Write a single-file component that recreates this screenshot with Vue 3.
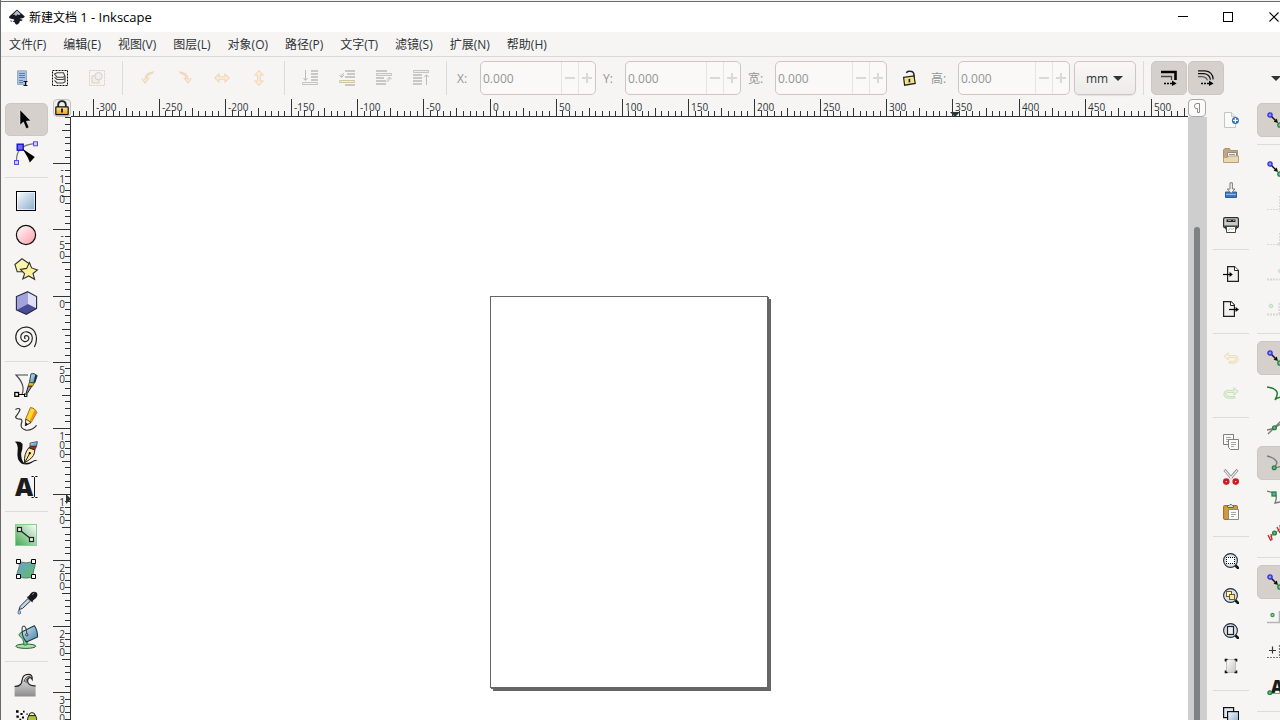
<template>
  <div class="window">
    <svg class="defs" aria-hidden="true" v-html="defs"></svg>

    <header class="titlebar">
      <svg class="logo" viewBox="0 0 16 16" v-html="icons.logo"></svg>
      <h1 class="title">新建文档 <span class="title-app">1 - Inkscape</span></h1>
      <div class="window-buttons">
        <button v-for="b in windowButtons" :key="b.icon" class="window-btn" :aria-label="b.label">
          <svg class="icon-window" viewBox="0 0 11 11" v-html="icons[b.icon]"></svg>
        </button>
      </div>
    </header>

    <nav class="menubar">
      <button v-for="m in menus" :key="m" class="menu-item">{{ m }}</button>
    </nav>

    <div class="controls">
      <template v-for="(group, i) in controlGroups" :key="i">
        <button v-for="name in group" :key="name" class="tool-btn" :aria-label="name">
          <svg class="icon-small" viewBox="0 0 16 16" v-html="icons[name]"></svg>
        </button>
        <span class="v-sep"></span>
      </template>

      <template v-for="f in fields" :key="f.id">
        <button v-if="f.id === 'h'" class="lock-btn" aria-label="锁定宽高比">
          <svg class="icon-small" viewBox="0 0 16 16" v-html="icons.unlock"></svg>
        </button>
        <label :for="f.id" :class="['field-label', 'label-' + f.id]">{{ f.label }}</label>
        <div :class="['spin', f.narrow ? 'spin-narrow' : '']">
          <input :id="f.id" v-model="f.value" class="spin-input" type="text" disabled>
          <button class="spin-btn" disabled aria-label="减少">
            <svg class="spin-icon" viewBox="0 0 10 10"><path d="M0 5H10" /></svg>
          </button>
          <button class="spin-btn" disabled aria-label="增加">
            <svg class="spin-icon" viewBox="0 0 10 10"><path d="M0 5H10M5 0V10" /></svg>
          </button>
        </div>
      </template>

      <div class="unit">
        <select v-model="unit" class="unit-select" aria-label="单位">
          <option>mm</option>
          <option>px</option>
          <option>cm</option>
        </select>
        <svg class="unit-arrow" viewBox="0 0 10 5"><path d="M0 0H10L5 5Z" /></svg>
      </div>
      <span class="v-sep"></span>
      <button class="tool-btn active" aria-label="缩放描边宽度">
        <svg class="icon-small" viewBox="0 0 16 16" v-html="icons.scaleStroke"></svg>
      </button>
      <button class="tool-btn active" aria-label="缩放圆角">
        <svg class="icon-small" viewBox="0 0 16 16" v-html="icons.scaleCorner"></svg>
      </button>
      <button class="more-btn" aria-label="更多">
        <svg class="more-arrow" viewBox="0 0 10 5"><path d="M0 0H10L5 5Z" /></svg>
      </button>
    </div>

    <main class="main">
      <aside class="toolbox">
        <div v-for="(group, i) in toolGroups" :key="i" class="toolbox-group">
          <button
            v-for="name in group"
            :key="name"
            :class="['toolbox-btn', { active: tool === name }]"
            :aria-label="name"
            @click="tool = name"
          >
            <svg class="icon-tool" viewBox="0 0 24 24" v-html="icons[name]"></svg>
          </button>
        </div>
      </aside>

      <section class="workspace">
        <button class="corner-btn" aria-label="锁定参考线">
          <svg class="icon-small" viewBox="0 0 16 16" v-html="icons.lock"></svg>
        </button>
        <svg class="ruler-h">
          <path class="tick" :d="hPath" />
          <text v-for="t in hLabels" :key="t.mm" class="ruler-text" :x="t.pos + 3" y="12">{{ t.mm }}</text>
          <path class="marker" d="M879 13H889L884 18Z" />
        </svg>
        <button class="corner-btn corner-right" aria-label="显示模式">
          <svg class="icon-small" viewBox="0 0 16 16" v-html="icons.display"></svg>
        </button>
        <svg class="ruler-v">
          <path class="tick" :d="vPath" />
          <template v-for="t in vLabels" :key="t.mm">
            <text
              v-for="(c, i) in t.chars"
              :key="i"
              class="ruler-text centered"
              x="9"
              :y="t.start + i * t.step"
            >{{ c }}</text>
          </template>
          <path class="marker" d="M13 377V387L18 382Z" />
        </svg>
        <div class="canvas">
          <div class="page"></div>
        </div>
        <div class="scrollbar">
          <div class="thumb"></div>
        </div>
      </section>

      <aside class="side commands">
        <div v-for="(group, i) in commandGroups" :key="i" class="side-group">
          <button v-for="name in group" :key="name" class="side-btn" :aria-label="name">
            <svg class="icon-small" viewBox="0 0 16 16" v-html="icons[name]"></svg>
          </button>
        </div>
      </aside>

      <aside class="side snap">
        <div v-for="(group, i) in snapGroups" :key="i" class="side-group">
          <button
            v-for="(s, j) in group"
            :key="j"
            :class="['side-btn', { active: s.on }]"
            :aria-label="s.icon"
            @click="s.on = !s.on"
          >
            <svg class="icon-small" viewBox="0 0 16 16" v-html="icons[s.icon]"></svg>
          </button>
        </div>
      </aside>
    </main>
  </div>
</template>

<script setup>
import { ref, reactive } from 'vue'

const tool = ref('select')
const unit = ref('mm')

const menus = ['文件(F)', '编辑(E)', '视图(V)', '图层(L)', '对象(O)', '路径(P)', '文字(T)', '滤镜(S)', '扩展(N)', '帮助(H)']

const windowButtons = [
  { icon: 'min', label: '最小化' },
  { icon: 'max', label: '最大化' },
  { icon: 'close', label: '关闭' }
]

const controlGroups = [
  ['selectAll', 'selectLayers', 'deselect'],
  ['rotateLeft', 'rotateRight', 'flipH', 'flipV'],
  ['toBottom', 'lower', 'raise', 'toTop']
]

const fields = reactive([
  { id: 'x', label: 'X:', value: '0.000' },
  { id: 'y', label: 'Y:', value: '0.000' },
  { id: 'w', label: '宽:', value: '0.000', narrow: true },
  { id: 'h', label: '高:', value: '0.000', narrow: true }
])

const toolGroups = [
  ['select', 'node'],
  ['rect', 'circle', 'star', 'box', 'spiral'],
  ['pen', 'pencil', 'calligraphy', 'text'],
  ['gradient', 'mesh', 'dropper', 'bucket'],
  ['tweak', 'spray']
]

const commandGroups = [
  ['new', 'open', 'save', 'print'],
  ['import', 'export'],
  ['undo', 'redo'],
  ['copy', 'cut', 'paste'],
  ['zoomSelection', 'zoomDrawing', 'zoomPage', 'centerPage'],
  ['duplicate']
]

const snapGroups = reactive([
  [{ icon: 'snap', on: true }],
  [
    { icon: 'snap', on: false },
    { icon: 'snapEdge', on: false },
    { icon: 'snapCorner', on: false },
    { icon: 'snapMid', on: false },
    { icon: 'snapCenter', on: false }
  ],
  [
    { icon: 'snap', on: true },
    { icon: 'snapPath', on: false },
    { icon: 'snapCross', on: false },
    { icon: 'snapCusp', on: true },
    { icon: 'snapSmooth', on: false },
    { icon: 'snapLine', on: false }
  ],
  [
    { icon: 'snap', on: true },
    { icon: 'snapObject', on: false },
    { icon: 'snapRotation', on: false },
    { icon: 'snapText', on: false }
  ],
  [{ icon: 'snapPage', on: false }]
])

// 标尺
const PX_PER_MM = 1.3228
const ORIGIN_X = 419
const ORIGIN_Y = 179

const buildTicks = (origin, from, to) => {
  const list = []
  for (let mm = from; mm <= to; mm += 5) {
    const len = mm % 50 === 0 ? 18 : mm % 25 === 0 ? 9 : 6
    list.push({ mm, pos: Math.floor(origin + mm * PX_PER_MM), len })
  }
  return list
}

const hTicks = buildTicks(ORIGIN_X, -315, 1500)
const vTicks = buildTicks(ORIGIN_Y, -135, 1000)
const hPath = hTicks.map(t => `M${t.pos + 0.5} ${18 - t.len}V18`).join('') + 'M0 17.5H4000'
const vPath = vTicks.map(t => `M${18 - t.len} ${t.pos + 0.5}H18`).join('') + 'M17.5 0V4000'
const hLabels = hTicks.filter(t => t.len === 18)
// 垂直标尺的数字逐个竖排
const vLabels = vTicks.filter(t => t.len === 18).map(t => ({
  mm: t.mm,
  chars: String(t.mm).split(''),
  start: t.pos + (t.mm < 0 ? 10 : 12),
  step: t.mm < 0 ? 10 : 9
}))

const defs = `
  <linearGradient id="g-blue" x1="0" y1="0" x2="1" y2="1"><stop offset="0" stop-color="#fff"/><stop offset="1" stop-color="#86a9cc"/></linearGradient>
  <linearGradient id="g-pink" x1="0" y1="0" x2="1" y2="1"><stop offset="0" stop-color="#fff"/><stop offset="1" stop-color="#ff9aa8"/></linearGradient>
  <linearGradient id="g-green" x1="1" y1="0" x2="0" y2="1"><stop offset="0" stop-color="#fff"/><stop offset="1" stop-color="#3fa850"/></linearGradient>
  <linearGradient id="g-mesh" x1="0" y1="0" x2="1" y2="1"><stop offset="0" stop-color="#6b9fd8"/><stop offset="1" stop-color="#5fc05c"/></linearGradient>
  <linearGradient id="g-steel" x1="0" y1="0" x2="1" y2="1"><stop offset="0" stop-color="#d5eaf5"/><stop offset="1" stop-color="#3f7fa8"/></linearGradient>
  <linearGradient id="g-gold" x1="0" y1="0" x2="0" y2="1"><stop offset="0" stop-color="#f9e9a0"/><stop offset="1" stop-color="#f19d10"/></linearGradient>
  <linearGradient id="g-paper" x1="0" y1="0" x2="1" y2="1"><stop offset="0" stop-color="#fff"/><stop offset="1" stop-color="#c4c4c2"/></linearGradient>
  <linearGradient id="g-grey" x1="0" y1="0" x2="0" y2="1"><stop offset="0" stop-color="#eee"/><stop offset="1" stop-color="#8c8c8c"/></linearGradient>`

const lens = '<path d="M12.5 12.5L15 15" stroke="#15191c" stroke-width="2.6" stroke-linecap="round"/><circle cx="7.5" cy="7.5" r="6.9" fill="#d3e3f1" stroke="#1f2d38" stroke-width="1.1"/>'
const greenDot = (x, y) => `<circle cx="${x}" cy="${y}" r="1.9" fill="#6fa0c8" stroke="#1f8a2c" stroke-width="1.3"/>`

const icons = {
  logo: '<path d="M8 0.5L15.5 7.2Q16.4 8.7 13.5 9.2L10.5 9.8Q12 10.5 13.6 10.7L13 11.8L10.8 12Q11 14.8 8 15.8Q5.6 15 6 13.4L3.4 12.2Q6.2 12 5 10.6L1.2 9.6Q-.8 8.3 .8 7Z" fill="#171922"/><path d="M8 1.5L11.6 5L10 6.2L8.6 5.2L7 7L5.5 5.5L3.6 6.2Z" fill="#b8bdcc"/><path d="M1.2 11.2L3.4 12L2 13Z" fill="#3a4258"/>',
  min: '<path d="M1 4.5H11" stroke="#000"/>',
  max: '<rect x=".5" y=".5" width="9" height="9" fill="none" stroke="#000"/>',
  close: '<path d="M.5 .5L9.5 9.5M9.5 .5L.5 9.5" stroke="#000" stroke-width="1.1"/>',

  selectAll: '<path d="M2.5 .8H11.5V14.5H2.5Z" fill="#a9c4e2" stroke="#9aaabb"/><path d="M4 3.5H10M4 5.5H10M4 7.5H10M4 10.5H8M4 12.5H8" stroke="#597fae"/><path d="M8.5 11.5H12.5M10.5 11.5V15.5M8.5 15.5H12.5" stroke="#111"/>',
  selectLayers: '<rect x=".5" y=".5" width="15" height="15" fill="none" stroke="#000" stroke-dasharray="2 1"/><path d="M2.5 4L5 2.8H11.5L13 6.2L11 7.2H5ZM2.5 7.4L5 9.5H11L13.2 8.4M2.5 10.4L5 13H11L13.5 11.6M13 6.2V12" fill="#f2f2f0" stroke="#444" stroke-width="1.1"/>',
  deselect: '<g opacity=".4"><rect x=".5" y=".5" width="15" height="15" fill="none" stroke="#e88080" stroke-dasharray="2 1"/><rect x="3" y="6" width="7" height="7" fill="#eceac0" stroke="#a6a17a"/><circle cx="9.5" cy="6.2" r="3.7" fill="#e4e6ea" stroke="#949aa4"/></g>',
  rotateLeft: '<path d="M14 1.8Q5.5 2 4.8 10M1.8 8.4L5 13L8.6 8.4H6.6Q7 4.5 13 3.2" fill="#fbeee0" stroke="#f1d6ba" stroke-width="1.2"/>',
  rotateRight: '<path d="M2 1.8Q10.5 2 11.2 10M14.2 8.4L11 13L7.4 8.4H9.4Q9 4.5 3 3.2" fill="#fbeee0" stroke="#f1d6ba" stroke-width="1.2"/>',
  flipH: '<path d="M.7 8L5 4V6.7H11V4L15.3 8L11 12V9.3H5V12Z" fill="#fbeee0" stroke="#f1d6ba" stroke-width="1.1"/>',
  flipV: '<path d="M8 .7L12 5H9.3V11H12L8 15.3L4 11H6.7V5H4Z" fill="#fbeee0" stroke="#f1d6ba" stroke-width="1.1"/>',
  toBottom: '<path d="M9 1H16M9 4H16M9 7H16M9 10H16" stroke="#c8c8c4" stroke-width="2"/><path d="M.5 12.5H15.5V14.5H.5Z" fill="none" stroke="#c3c3bf"/><path d="M3.5 0V10M1.5 8L3.5 10.5L5.5 8" fill="none" stroke="#bbb"/>',
  lower: '<path d="M6 1H16M8 4H16M6 7H16M6 15H16" stroke="#c8c8c4" stroke-width="2"/><path d="M.5 10.5H15.5V12.5H.5Z" fill="#f7efc8" stroke="#cfc8a4"/><path d="M5 3.5Q2.5 3.5 2.5 7M.5 5L2.5 7.5L5 5" fill="none" stroke="#bbb"/>',
  raise: '<path d="M0 1H11M0 8H8M0 11H10M0 14H10" stroke="#c8c8c4" stroke-width="2"/><path d="M.5 3.5H15.5V5.5H.5Z" fill="#eee" stroke="#c3c3bf"/><path d="M10.5 11.5Q13.5 11.5 13.5 8M11 9.5L13.5 7L16 9.5" fill="none" stroke="#bbb"/>',
  toTop: '<path d="M0 5H9M0 8H9M0 11H9M0 14H9" stroke="#c8c8c4" stroke-width="2"/><path d="M.5 .5H15.5V2.5H.5Z" fill="#eee" stroke="#c3c3bf"/><path d="M13.5 15V5M11.2 7.2L13.5 4.7L15.8 7.2" fill="none" stroke="#bbb"/>',
  unlock: '<path d="M5.5 3Q6 .8 9 1.2Q13 1.4 13 5V8" fill="none" stroke="#222" stroke-width="1.5"/><path d="M2.6 7.4L13 6L14.2 13.4L3.6 15.2Z" fill="#f1e48a" stroke="#222" stroke-width="1.2"/><path d="M8.4 8.8V12.4" stroke="#222" stroke-width="1.7"/>',
  scaleStroke: '<path d="M0 2H14.5V10" fill="none" stroke="#000" stroke-width="2.6"/><path d="M0 6.5H10.5V10" fill="none" stroke="#444" stroke-width="1.3"/><path d="M3 13.5H12" stroke="#000" stroke-width="1.6" stroke-dasharray="2 1"/><path d="M11 10.6L15.6 13.5L11 16Z"/>',
  scaleCorner: '<path d="M0 .8H7Q14.8 1.5 15.2 9.4M0 3.6H6Q11.8 4.2 12.4 9.8" fill="none" stroke="#111" stroke-width="1.2"/><path d="M0 6.6H4Q8.6 7 9.4 10.4" fill="none" stroke="#555" stroke-width="1.2"/><path d="M3 13.5H12" stroke="#000" stroke-width="1.6" stroke-dasharray="2 1"/><path d="M11 10.6L15.6 13.5L11 16Z"/>',
  lock: '<path d="M4.2 7V4.5Q4.5 1.2 8 1.2Q11.5 1.2 11.8 4.5V7" fill="none" stroke="#222" stroke-width="1.8"/><rect x="1.8" y="6.8" width="12.4" height="7.8" rx=".6" fill="url(#g-gold)" stroke="#111" stroke-width="1.2"/><path d="M8 8.5V12.5" stroke="#111" stroke-width="1.8"/>',
  display: '<path d="M8 3.5H10.5V12.5H8.5V8.5H7Q5.5 8 5.5 6Q5.5 3.5 8 3.5Z" fill="#fff" stroke="#8a8a8a"/>',

  select: '<path d="M6 2.8V18.2L9.4 15L12.2 21.8L15 20.4L12.4 14.2L16.8 13.8Z" fill="#000" stroke="#fff" stroke-width=".5"/>',
  node: '<path d="M2.5 20Q2 4.5 20 2.7" fill="none" stroke="#777" stroke-width="1.2"/><rect x="3.2" y="3.2" width="6" height="6" fill="#6a6af5" stroke="#1414c8" stroke-width="1.4"/><rect x="19.5" y=".8" width="4" height="4" fill="#ccf" stroke="#5050f0"/><rect x=".5" y="19.5" width="4" height="4" fill="#ccf" stroke="#5050f0"/><path d="M8.5 7.8L20.8 16L15.8 21.5L13.8 16.6Z" fill="#000"/>',
  rect: '<rect x="2.5" y="2.5" width="19" height="19" fill="url(#g-blue)" stroke="#000"/><rect x="3.5" y="3.5" width="17" height="17" fill="none" stroke="#fff" stroke-opacity=".6"/>',
  circle: '<circle cx="12" cy="12" r="9.6" fill="url(#g-pink)" stroke="#111" stroke-width="1.2"/>',
  star: '<path d="M8 1.7L16 7.2L13 14.7H3.2L.9 7.5Z" fill="#fdf6ae" stroke="#333" stroke-width="1.1"/><path d="M15.3 5.5L17.6 10.9L23.4 13L19 16.5L20.6 22.3L14.7 18.9L8.8 22L10.6 16.6L6.5 12.4L12.6 11.4Z" fill="#fdf29a" stroke="#333" stroke-width="1.1"/>',
  box: '<path d="M13.7 .7L22.6 5.5V17.5L12.3 23.3L2.4 19V5.5Z" fill="#9c9cd8"/><path d="M13.7 .7L22.6 5.5V17.5L13.7 13Z" fill="#e0e0f8"/><path d="M2.4 19L13.7 13L22.6 17.5L12.3 23.3Z" fill="#4b4b9c"/><path d="M2.4 5.5L13.7 .7V13L2.4 19Z" fill="#a3a3dc"/><path d="M13.7 .7L22.6 5.5V17.5L12.3 23.3L2.4 19V5.5Z" fill="none" stroke="#2a2a44" stroke-width="1.1"/>',
  spiral: '<path d="M11.5 13.8C10 13.2 10.2 10.8 12 10.6C14.8 10.4 15.6 13.4 14.2 15.2C11.8 17.8 7.4 16.4 6.8 13C6.2 9 9.4 6.4 13 6.8C17.8 7.4 19.2 12 17.8 16C15.4 21.6 8.6 23.4 4.8 19.4C.6 15 .8 8.4 5 4.6C10 .2 17.6 1.8 20.8 7C23 11.2 23 16.8 20.4 22" fill="none" stroke="#222" stroke-width="1.2"/>',
  pen: '<path d="M14 2H2Q8 8 9 14Q9.4 19 8 21" fill="none" stroke="#444" stroke-width="1.1"/><path d="M4 21.5H11" stroke="#000"/><rect x=".8" y="19.5" width="3.8" height="3.8" fill="#fff" stroke="#000" stroke-width="1.3"/><rect x="10.5" y="21" width="2.4" height="2.4" fill="#fff" stroke="#000"/><path d="M17 .8Q20 -.4 23.2 2.6L20.8 9.8L15.4 9.4Z" fill="url(#g-steel)" stroke="#244a5c"/><path d="M21.2 2L23.2 2.6L20.8 9.8L19.6 9.6Z" fill="#1b2c36"/><path d="M15.4 9.4L20.2 10L18.4 13.4H14Z" fill="#f6b524" stroke="#5c420c" stroke-width=".8"/><path d="M14.2 13.2H17.8L13.2 20.6L12.2 20Z" fill="#999" stroke="#222"/>',
  pencil: '<path d="M1.4 2.6Q5 .4 6 2.6Q5.4 5 1.6 9.8Q1.4 12 6.6 12.2Q9 12.8 7.2 17Q6.2 21.6 12 23.2Q18 23.8 22.6 18.4" fill="none" stroke="#333" stroke-width="1.2"/><path d="M16.4 .6Q21 .8 22.8 5.6L17.2 15.4L11.4 18.6L11.8 11.6Z" fill="#fdd835" stroke="#7c4b06" stroke-width=".8"/><path d="M20.8 2.6L22.6 5.6L17 15.4L15.6 14.4Z" fill="#f19021"/><path d="M11.9 12L17 15.4L11.4 18.6Z" fill="#fdf8d4" stroke="#222" stroke-width=".8"/><path d="M11.7 15.4L14.2 17.2L11.2 19Z" fill="#111"/>',
  calligraphy: '<path d="M.8 .8Q6.4 -.2 8.6 3Q8.8 8 7.2 12Q6.8 19.4 10.6 22.2Q16 21.6 18.4 20.2Q21.4 18 23.6 19.6Q20 20 17.4 22Q12.6 24.8 7.4 22.4Q2.4 19 3.6 10Q4.6 3.4 .8 .8Z" fill="#111"/><path d="M16 2L23.4 .6L22.6 5.4L16 5.2Z" fill="url(#g-steel)" stroke="#244a5c" stroke-width=".8"/><path d="M16 5.2L22.4 5.6L21 8.8L15 6.8Z" fill="#c41c1c" stroke="#4c0a0a" stroke-width=".6"/><path d="M14.8 6.8L20.8 9Q20.8 15 15.4 18.6L10.6 22Q9.6 13 14.8 6.8Z" fill="#fbe9a0" stroke="#222"/><path d="M11 21L15.6 12.6" stroke="#222"/><circle cx="15.8" cy="12.2" r="1.1"/>',
  text: '<text x="1" y="21" font-family="Open Sans, sans-serif" font-weight="800" font-size="25" fill="#1c1c1c">A</text><path d="M17.5 1.5H19.5L20.5 2.5L21.5 1.5H23.5M20.5 2.5V21.5M17.5 22.5H19.5L20.5 21.5L21.5 22.5H23.5" fill="none" stroke="#111"/>',
  gradient: '<rect x="1.5" y="1.5" width="21" height="21" fill="url(#g-green)" stroke="#8ccc94"/><path d="M7 8L17 16" stroke="#222" stroke-width="1.2"/><rect x="3.5" y="4.5" width="4" height="4" fill="#eee" stroke="#222" stroke-width="1.2"/><rect x="15.5" y="14.5" width="4" height="4" fill="#eee" stroke="#222" stroke-width="1.2"/>',
  mesh: '<path d="M4.5 4.5Q12 7.4 19.5 4.5Q22.4 6 20 12Q18.6 16 19.5 19.5Q12 22.6 4.5 19.5Q1.8 17 4.6 12Q6.2 9 4.5 4.5Z" fill="url(#g-mesh)" stroke="#4c6c6c" stroke-width=".9"/><path d="M2.5 2.5H6.5V6.5H2.5ZM17.5 2.5H21.5V6.5H17.5ZM2.5 17.5H6.5V21.5H2.5ZM17.5 17.5H21.5V21.5H17.5Z" fill="#fff" stroke="#000"/>',
  dropper: '<path d="M14 7.5L6.2 15.2L5 18.6L8.6 17.4L16.6 9.8Z" fill="#bcd6ee" stroke="#333"/><path d="M17 2Q20-.2 22.6 1.6Q24.6 4.4 21.8 7.2L19 9.6L18.4 11.4L12.8 6L14.6 5.2Z" fill="#15171b"/><path d="M18 3.6L20.4 2" stroke="#888"/><path d="M5.2 18.4Q3.4 21 4.2 22.6Q5.4 23.8 6.6 22.4Q7 21 5.2 18.4Z" fill="#9cc4ec" stroke="#35608e" stroke-width=".8"/>',
  bucket: '<ellipse cx="11.8" cy="21.2" rx="10" ry="2.2" fill="#a6e4a8" stroke="#2c5a30"/><path d="M9.2 7Q4 8 5.4 11Q10 13.6 9.8 20H12.6Q15.4 15 9.2 7Z" fill="#7fd08c" stroke="#2a6a36" stroke-width=".9"/><path d="M8.2 6.8L20.4 .8Q23.4 5 23.6 12L12.4 17Q8.4 12.8 8.2 6.8Z" fill="url(#g-steel)" stroke="#1f3a48" stroke-width="1.1"/><path d="M8.2 6.8Q7.4 1 10 1Q12.4 2 12.8 8.6" fill="none" stroke="#444" stroke-width="1.1"/><circle cx="12.8" cy="9.8" r="1.2" fill="#ddd" stroke="#333"/>',
  tweak: '<path d="M.6 13.4Q7.6 13.8 8 7.4Q8.6 1.4 14.4 1.4Q18.6 1.4 18.2 6.4L16.6 4.8Q13.6 4.6 13.8 9Q14.4 13 21.6 12.8V23.4H.6Z" fill="url(#g-grey)"/><path d="M.6 13.4Q7.6 13.8 8 7.4Q8.6 1.4 14.4 1.4Q18.6 1.4 18.2 6.4Q16.8 4 14.8 5Q12.6 7 14.4 10.6Q16.6 13.2 21.6 12.8" fill="none" stroke="#222" stroke-width="1.2"/><path d="M10 9Q11 3.4 16.6 3.2M12 10Q11.4 6.4 14 4.6" fill="none" stroke="#444" stroke-width=".9"/>',
  spray: '<path d="M2 3.2H4.6V5.8H2ZM6.4 6H8.6V8H6.4ZM2.4 8.4H4.8V10.8H2.4ZM9 3.8H10.6V5.4H9ZM8 9.6H10V11.6H8ZM12.4 6.4H13.8V7.8H12.4ZM5.4 11.8H7.2V13.4H5.4Z"/><path d="M13.6 11.4L15 8H21.4L22.6 11.4V24H13.6Z" fill="#a8c23c" stroke="#222"/><path d="M15 8.6Q15 5.6 18 5.6Q21 5.6 21 8.6Z" fill="#f7efb0" stroke="#222"/>',

  new: '<path d="M1.5 .5H8.5L12.5 4.5V15.5H1.5Z" fill="#fbfbfb" stroke="#c4c6c2"/><path d="M8.5 .5V4.5H12.5" fill="#eee" stroke="#c4c6c2"/><circle cx="12.4" cy="8.4" r="3.5" fill="#2f6fb4"/><path d="M12.4 6V10.8M10 8.4H14.8" stroke="#fff" stroke-width="1.3"/>',
  open: '<path d="M.5 14V3L1.8 1.5H6.4L7.6 3.5H14.5V14Z" fill="#c2a87a" stroke="#a89270"/><path d="M4.5 5.5H13.5V11H4.5Z" fill="#f6f6f4" stroke="#8c8c88"/><path d="M6 7.5H12" stroke="#999"/><path d="M.5 15.5V10.5L4 10.5L6 9H15.5V15.5Z" fill="#ecd6b4" stroke="#b79f7c"/>',
  save: '<path d="M2.5 10H13.5V15.5H2.5Z" fill="#3f78c0" stroke="#2c5c9c"/><path d="M3 12.4H13" stroke="#9cc0ea"/><path d="M7 .8H9.4V7H12L8.2 11.2L4.2 7H7Z" fill="#f4f4f2" stroke="#7c7e7a"/>',
  print: '<rect x=".6" y=".6" width="14.8" height="10" rx="1.4" fill="#c9cbc7" stroke="#2c2f30" stroke-width="1.2"/><path d="M3.5 2.5H12.5V5H3.5Z" fill="#222"/><path d="M5 3.5H8M10 3.5H11.5" stroke="#999"/><path d="M1 8.6H15L13.5 12.5H2.5Z" fill="#333638"/><path d="M3.5 9.5H12.5V15.5H3.5Z" fill="#fdfdfb" stroke="#444"/><path d="M5 13.5L7.5 11.2L9 12.6L11 11" stroke="#9ad07c" fill="none"/>',
  import: '<path d="M4.6 .6H11.5L15.4 4.5V15.4H4.6Z" fill="#f2f1ec" stroke="#222" stroke-width="1.2"/><path d="M11.5 .6V4.5H15.4" fill="#fff" stroke="#222"/><path d="M0 8.5H8" stroke="#000" stroke-width="1.2"/><path d="M6.6 6L9.8 8.5L6.6 11Z"/>',
  export: '<path d="M.6 .6H8L11.4 4V15.4H.6Z" fill="#f2f1ec" stroke="#222" stroke-width="1.2"/><path d="M7.5 .6V4.5H11.4" fill="#fff" stroke="#222"/><path d="M6 8.5H14" stroke="#000" stroke-width="1.2"/><path d="M12.6 6L16 8.5L12.6 11Z"/>',
  undo: '<path d="M5.2 2.6L.8 6.4L5.2 10V7.6H11.6Q13.4 7.8 13 9.8Q12.6 11.2 9.6 11.4H6V13.2H10Q15 13.2 15.2 9Q15 5.6 11.6 5.4H5.2Z" fill="#f9f1d8" stroke="#ebdcb8"/>',
  redo: '<path d="M10.8 2.6L15.2 6.4L10.8 10V7.6H4.4Q2.6 7.8 3 9.8Q3.4 11.2 6.4 11.4H12V13.2H6Q1 13.2 .8 9Q1 5.6 4.4 5.4H10.8Z" fill="#e6f1de" stroke="#c6dfb6"/>',
  copy: '<path d="M.5 .5H10.5V10.5H.5Z" fill="#fafaf8" stroke="#7f817d"/><path d="M3 3.5H8M3 5.5H8M3 7.5H6" stroke="#a5a7a3"/><path d="M5.5 5.5H15.5V15.5H7.5L5.5 13.5Z" fill="#fafaf8" stroke="#7f817d"/><path d="M8 8.5H13M8 10.5H13M8 12.5H11" stroke="#a5a7a3"/>',
  cut: '<path d="M1.5 .8L9 9.6M14.5 .8L7 9.6" stroke="#8a8c88" stroke-width="2.8"/><path d="M1.8 1.4L9 9.6M14.2 1.4L7 9.6" stroke="#f2f2f0" stroke-width="1.2"/><circle cx="3.3" cy="12.6" r="2" fill="#fff" stroke="#d01c24" stroke-width="2.6"/><circle cx="12.7" cy="12.6" r="2" fill="#fff" stroke="#d01c24" stroke-width="2.6"/>',
  paste: '<rect x=".6" y="1.6" width="13.8" height="13.8" rx=".8" fill="#d39a40" stroke="#9a6a1e"/><path d="M4.5 3.5V1.5H6L7 .5H8.5L9.5 1.5H10.5V3.5Z" fill="#d8dad6" stroke="#666864"/><path d="M5.5 5.5H15.5V15.5H5.5Z" fill="#fbfbf9" stroke="#888a86"/><path d="M8 8.5H13M8 10.5H13M8 12.5H11" stroke="#a5a7a3"/>',
  zoomSelection: lens + '<rect x="3" y="4" width="9" height="7" fill="#fff"/><path d="M3 4.5H12M3 10.5H12M3.5 4V11M11.5 4V11" stroke="#000" stroke-dasharray="1 1"/>',
  zoomDrawing: lens + '<rect x="3.5" y="3.5" width="5" height="5" fill="#fff8d0" stroke="#7a5a10"/><rect x="6.5" y="6.5" width="5" height="5" fill="#fbe7a0" stroke="#7a5a10"/>',
  zoomPage: lens + '<rect x="4.5" y="3.5" width="6" height="8" fill="#eee" stroke="#222" stroke-width="1.2"/>',
  centerPage: '<rect x="3.5" y="1.5" width="9" height="13" fill="url(#g-paper)" stroke="#c0c0bc"/><path d="M2.5 3.5V1.5H4.5M11.5 1.5H13.5V3.5M2.5 12.5V14.5H4.5M11.5 14.5H13.5V12.5" fill="none" stroke="#111" stroke-width="1.6"/>',
  duplicate: '<rect x=".6" y=".6" width="10" height="10" fill="#dfe9f3" stroke="#111" stroke-width="1.2"/><rect x="4.6" y="4.6" width="11" height="11" fill="url(#g-blue)" stroke="#111" stroke-width="1.2"/>',

  snap: '<path d="M4.5 4.5L9 9" stroke="#111" stroke-width="1.4"/><path d="M11 11L6.6 9.8L9.8 6.6Z" fill="#111"/><circle cx="3" cy="3" r="2.1" fill="#8f8ff5" stroke="#2b2be0" stroke-width="1.3"/><circle cx="13" cy="13" r="2.2" fill="#8cb4c4" stroke="#1f8a2c" stroke-width="1.3"/>',
  snapEdge: '<path d="M0 13.5H13M12.5 0V16" stroke="#d3ddd3" stroke-dasharray="2 1"/>',
  snapCorner: '<path d="M0 13.5H13M12.5 2V13" stroke="#d3ddd3" stroke-dasharray="2 1"/><circle cx="12.5" cy="13" r="2" fill="#cfe4d0"/>',
  snapMid: '<path d="M0 13.5H16" stroke="#d8d8d6" stroke-width="2" stroke-dasharray="2 1"/><circle cx="13" cy="5" r="2.2" fill="#cfe4d0"/>',
  snapCenter: '<path d="M0 13.5H16M12.5 2V13" stroke="#d8d8d6" stroke-width="2" stroke-dasharray="2 1"/><circle cx="4" cy="5" r="1.8" fill="#dcebdc" stroke="#b9dcbc"/>',
  snapPath: '<path d="M0 2Q8 3 10 7Q11 10 8 15M8 14.5Q11 12 15 12" fill="none" stroke="#1f7a2a" stroke-width="1.5"/>',
  snapCross: '<path d="M0 10Q7 9 15 3M1 14L14 1" fill="none" stroke="#777975" stroke-width="1.3"/>' + greenDot(7.5, 7.8),
  snapCusp: '<path d="M0 1Q9 3 10 8L8 12M8 13L15 11" fill="none" stroke="#777" stroke-width="1.3"/>' + greenDot(7.2, 12.8),
  snapSmooth: '<path d="M0 1L7 3Q11 6 8 13L15 11.6" fill="none" stroke="#777" stroke-width="1.3"/><rect x="5" y="2" width="4" height="4" fill="#6fa0c8" stroke="#1f8a2c" stroke-width="1.3"/>',
  snapLine: '<path d="M2 13L14 3" stroke="#888"/><path d="M1 10L4 16M4 9L5 15M10 2L13 8M13 0L14 7" stroke="#cc2a2a" stroke-width="1.4"/>' + greenDot(7.5, 8),
  snapObject: '<path d="M0 13.5H13M12.5 2V14" stroke="#b4b6b2" stroke-width="1.6"/><circle cx="5.5" cy="6" r="1.6" fill="#9cc4c0" stroke="#3a9a46" stroke-width="1.2"/>',
  snapRotation: '<path d="M5.5 2.5V9.5M2 6.5H9" stroke="#333" stroke-width="1.2"/><path d="M0 13.5H16M12.5 1V14" stroke="#777" stroke-width="1.2" stroke-dasharray="2 1"/>',
  snapText: '<text x="4" y="14" font-family="Open Sans, sans-serif" font-weight="800" font-size="17" fill="#1c1c1c">A</text><path d="M3 14.5H16" stroke="#6ab070"/>' + greenDot(2.8, 13.8),
  snapPage: '<path d="M1.5 1.5H14.5V14.5H1.5Z" fill="#fff" stroke="#777"/>'
}
</script>

<style>
body {
  background: #f6f5f4;
}
</style>

<style scoped>
.window {
  height: 100vh;
  display: flex;
  flex-direction: column;
  overflow: hidden;
  box-sizing: border-box;
  padding-top: 1px;
  border-left: 1px solid #666a6d;
  background: #f6f5f4;
  color: #2e3436;
  font-family: "Open Sans", "Noto Sans CJK SC", sans-serif;
  font-size: 12px;
}

.window button,
.window select,
.window input {
  font: inherit;
  color: inherit;
  margin: 0;
  padding: 0;
  border: none;
  background: none;
  box-sizing: border-box;
}

.window svg {
  display: block;
  flex: none;
}

.window .defs {
  position: absolute;
  width: 0;
  height: 0;
}

.icon-small {
  width: 16px;
  height: 16px;
}

.titlebar {
  flex: none;
  height: 30px;
  display: flex;
  align-items: center;
  gap: 4px;
  padding-left: 8px;
  border-top: 1px solid #6b6b6b;
  background: #fff;
}

.logo {
  width: 16px;
  height: 16px;
}

.title {
  margin: 0;
  font-size: 12px;
  font-weight: 400;
  line-height: 30px;
  color: #000;
}

.title-app {
  font-size: 13px;
}

.window-buttons {
  display: flex;
  margin-left: auto;
  margin-right: -17px;
}

.window .window-btn {
  width: 46px;
  height: 30px;
  padding-left: 18px;
}

.icon-window {
  width: 11px;
  height: 11px;
}

.menubar {
  flex: none;
  height: 24px;
  display: flex;
  gap: 1px;
  border-bottom: 1px solid #dad9d7;
}

.window .menu-item {
  padding: 1px 8px 0;
  line-height: 24px;
}

.controls {
  flex: none;
  display: flex;
  align-items: center;
  padding: 4px 0 4px 4px;
}

.window .tool-btn {
  flex: none;
  width: 36px;
  height: 34px;
  display: grid;
  place-items: center;
  border-radius: 5px;
}

.window .tool-btn + .tool-btn {
  margin-left: 1px;
}

.window .active {
  background: #d5d0cc;
  border: 1px solid #cdc7c2;
}

.v-sep {
  flex: none;
  width: 1px;
  height: 34px;
  margin: 0 7px;
  background: #dcdbd8;
}

.field-label {
  flex: none;
  box-sizing: border-box;
  color: #929595;
}

.label-x {
  width: 26px;
  padding-left: 3px;
}

.label-y {
  width: 29px;
  padding-left: 7px;
}

.label-w {
  width: 34px;
  padding-left: 7px;
}

.label-h {
  width: 27px;
}

.spin {
  flex: none;
  display: flex;
  box-sizing: border-box;
  width: 116px;
  height: 34px;
  border: 1px solid #cdc7c2;
  border-radius: 5px;
  background: #faf9f8;
}

.spin-narrow {
  width: 112px;
}

.window .spin-input {
  flex: 1;
  min-width: 0;
  padding-left: 2px;
  font-size: 12px;
  color: #929595;
}

.window .spin-btn {
  width: 17px;
  display: grid;
  place-items: center;
  border-left: 1px solid #e6e4e1;
}

.spin-icon {
  width: 10px;
  height: 10px;
  stroke: #d9d9d7;
  stroke-width: 2;
}

.window .lock-btn {
  flex: none;
  width: 44px;
  height: 34px;
  display: grid;
  place-items: center;
}

.unit {
  flex: none;
  position: relative;
  margin-left: 4px;
}

.window .unit-select {
  appearance: none;
  width: 62px;
  height: 34px;
  padding: 0 20px 0 11px;
  border: 1px solid #cdc7c2;
  border-radius: 5px;
  background: linear-gradient(#f9f8f7, #edebe9);
  box-shadow: 0 1px 1px rgba(0, 0, 0, 0.08);
}

.unit-arrow {
  position: absolute;
  right: 13px;
  top: 15px;
  width: 10px;
  height: 5px;
  fill: #2e3436;
  pointer-events: none;
}

.window .more-btn {
  margin-left: auto;
  margin-right: -1px;
  height: 34px;
}

.more-arrow {
  width: 10px;
  height: 5px;
  fill: #2e3436;
}

.main {
  flex: 1;
  min-height: 0;
  display: flex;
}

.toolbox {
  flex: none;
  width: 52px;
  box-sizing: border-box;
  padding: 4px 5px 0 4px;
}

.toolbox-group {
  display: grid;
  gap: 1px;
}

.toolbox-group + .toolbox-group,
.side-group + .side-group {
  margin-top: 7px;
  border-top: 1px solid #dcdbd8;
  padding-top: 7px;
}

.window .toolbox-btn {
  width: 43px;
  height: 33px;
  display: flex;
  justify-content: flex-start;
  align-items: flex-start;
  padding: 4px 9px;
  border-radius: 5px;
}

.window .toolbox-btn.active {
  padding: 3px 8px;
}

.icon-tool {
  width: 24px;
  height: 24px;
  overflow: visible;
}

.workspace {
  flex: 1;
  min-width: 0;
  display: grid;
  grid-template-columns: 18px minmax(0, 1fr) 19px;
  grid-template-rows: 18px minmax(0, 1fr);
}

.window .corner-btn {
  width: 18px;
  height: 18px;
  display: grid;
  place-items: center;
  border: 1px solid #c6c2be;
  border-radius: 4px;
  background: #f1efed;
}

.window .corner-right {
  background: #fafafa;
  border-color: #a8a8a8;
}

.ruler-h {
  width: 100%;
  height: 18px;
  overflow: hidden;
}

.ruler-v {
  width: 18px;
  height: 100%;
  overflow: hidden;
}

.tick {
  stroke: #2e3436;
  fill: none;
}

.marker {
  fill: #2e3436;
}

.ruler-text {
  font-size: 10px;
  fill: #2e3436;
}

.centered {
  text-anchor: middle;
}

.canvas {
  position: relative;
  overflow: hidden;
  background: #fff;
}

.page {
  position: absolute;
  left: 419px;
  top: 179px;
  width: 276px;
  height: 390px;
  border: 1px solid #666;
  background: #fff;
  box-shadow: 1px 1px 0 #666, 3px 3px 0 #666;
}

.scrollbar {
  display: flex;
  justify-content: center;
  padding-top: 110px;
  border-right: 1px solid #d5d0cc;
  background: #cecece;
}

.thumb {
  width: 6px;
  border-radius: 3px 3px 0 0;
  background: #7e8282;
}

.side {
  flex: none;
  box-sizing: border-box;
  overflow: hidden;
}

.commands {
  width: 47px;
  padding: 4px 5px 0 6px;
}

.snap {
  width: 26px;
  padding: 4px 0 0 3px;
}

.side-group {
  display: grid;
  gap: 1px;
}

.window .side-btn {
  width: 36px;
  height: 34px;
  display: grid;
  place-items: center;
  border-radius: 5px;
}
</style>
